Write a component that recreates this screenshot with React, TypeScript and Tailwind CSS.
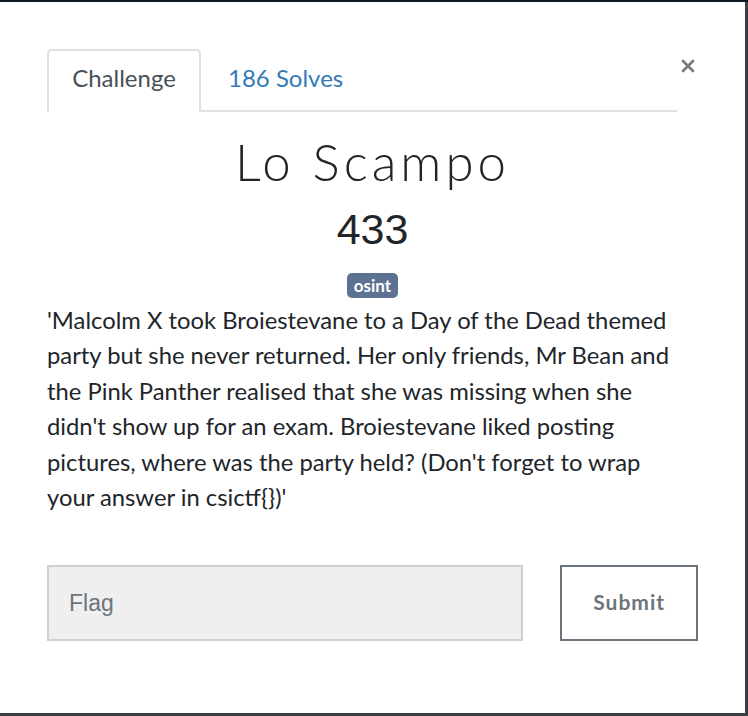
import { X } from 'lucide-react'

const description =
  "'Malcolm X took Broiestevane to a Day of the Dead themed party but she never returned. Her only friends, Mr Bean and the Pink Panther realised that she was missing when she didn't show up for an exam. Broiestevane liked posting pictures, where was the party held? (Don't forget to wrap your answer in csictf{})'"

const App = () => {
  return (
    <div className="w-[748px] h-[716px] bg-[#3b3f44] overflow-hidden">
      <div className="h-[2px] bg-[#0d1822]" />
      <div className="w-[745px] h-[711px] bg-white relative px-[47px] pt-[47px] font-['Lato',sans-serif] text-[#212529]">
        {/* Close */}
        <button className="absolute left-[678px] top-[54px] text-[#7a7a7a]" aria-label="Close">
          <X className="w-[20px] h-[20px]" strokeWidth={3.2} />
        </button>

        {/* Tabs */}
        <div className="w-[630px] flex border-b-2 border-[#dee2e6] h-[63px]">
          <div className="w-[154px] h-[63px] -mb-[2px] pb-[7px] border-2 border-b-0 border-[#dee2e6] rounded-t-[5px] bg-white flex items-center justify-center text-[24px] text-[#495057]">
            Challenge
          </div>
          <div className="h-[61px] pb-[3px] flex items-center pl-[27px] text-[24px] text-[#337ab7]">
            186 Solves
          </div>
        </div>

        {/* Header */}
        <div className="flex flex-col items-center">
          <h1 className="mt-[19px] text-[51px] leading-[62px] font-light tracking-[4px] text-[#212529]">
            Lo Scampo
          </h1>
          <div className="mt-[10px] font-['Liberation_Sans',Arial,sans-serif] text-[43px] leading-[52px] text-[#212529]">
            433
          </div>
          <span className="mt-[18px] h-[25px] px-[7px] rounded-[5px] bg-[#5d7292] text-white text-[17px] font-bold leading-[25px]">
            osint
          </span>
        </div>

        {/* Description */}
        <p className="mt-[5px] w-[640px] text-[23.8px] leading-[35.4px] text-[#212529]">
          {description}
        </p>

        {/* Form */}
        <div className="mt-[50px] flex gap-[37px]">
          <input
            placeholder="Flag"
            className="w-[477px] h-[76px] bg-[#efefef] border-2 border-[#ccd1d6] px-[20px] text-[23px] font-['Liberation_Sans',Arial,sans-serif] placeholder:text-[#6c757d] outline-none"
          />
          <button className="w-[138px] h-[76px] border-2 border-[#6c757d] text-[#6c757d] text-[21px] font-bold tracking-[1px] bg-white pb-[3px]">
            Submit
          </button>
        </div>
      </div>
    </div>
  )
}

export default App
